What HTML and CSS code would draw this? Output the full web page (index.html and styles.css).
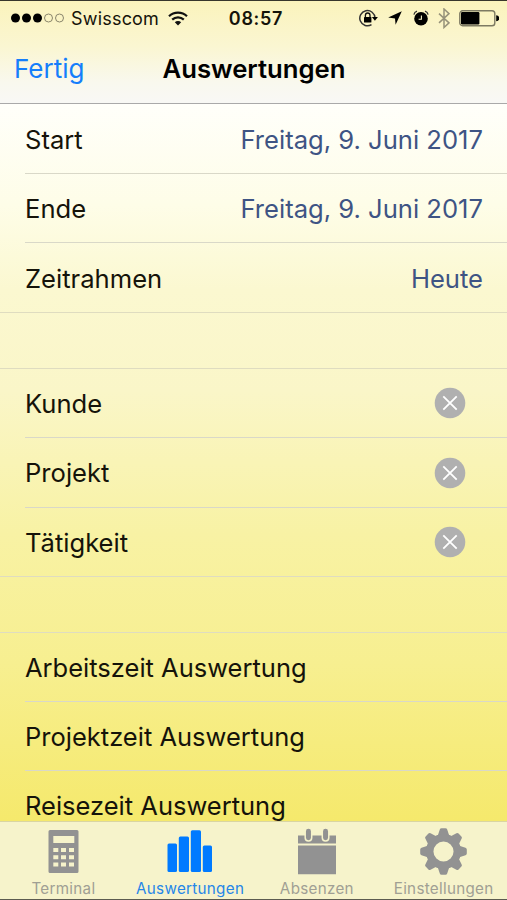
FILE: index.html
```html
<!DOCTYPE html>
<html lang="de">
<head>
    <meta charset="UTF-8">
    <meta name="viewport" content="width=device-width, initial-scale=1.0">
    <title>Auswertungen</title>
    <link rel="stylesheet" href="styles.css">
</head>
<body>
    <div class="screen">
        <header class="header">
            <div class="status-bar">
                <div class="status-left">
                    <svg class="signal" width="54" height="12" viewBox="0 0 54 12">
                        <circle cx="5.5" cy="6" r="4.5"/>
                        <circle cx="16.5" cy="6" r="4.5"/>
                        <circle cx="27.5" cy="6" r="4.5"/>
                        <circle class="empty" cx="38.5" cy="6" r="4"/>
                        <circle class="empty" cx="49.5" cy="6" r="4"/>
                    </svg>
                    <span class="carrier">Swisscom</span>
                    <svg class="wifi" width="20" height="15" viewBox="0 0 20 15">
                        <path d="M1 5.2a13 13 0 0 1 18 0M4.2 8.6a8.4 8.4 0 0 1 11.6 0" fill="none" stroke="#111" stroke-width="2.2"/>
                        <path d="M10 14.6l-3.2-3.4a4.6 4.6 0 0 1 6.4 0z" fill="#111"/>
                    </svg>
                </div>
                <span class="time">08:57</span>
                <div class="status-right">
                    <svg class="lock" width="20" height="18" viewBox="0 0 20 18">
                        <path d="M16 9A7.6 7.6 0 1 0 12.5 15.6" fill="none" stroke="#333" stroke-width="1.5"/>
                        <path d="M12.9 8h6l-3 3.8z"/>
                        <rect x="5" y="8" width="7.4" height="5.6" rx=".6"/>
                        <path d="M6.4 8V6.3a2.3 2.3 0 0 1 4.6 0V8" fill="none" stroke="#111" stroke-width="1.3"/>
                    </svg>
                    <svg class="location" width="14" height="14" viewBox="0 0 14 14">
                        <path d="M13.8.2L7.6 13.8 7 7.4.2 6.4z"/>
                    </svg>
                    <svg class="alarm" width="16" height="16" viewBox="0 0 16 16">
                        <circle cx="8" cy="8.8" r="6.8"/>
                        <path d="M.9 4.6A4.5 4.5 0 0 1 4 1.2M15.1 4.6A4.5 4.5 0 0 0 12 1.2" fill="none" stroke="#333" stroke-width="1.3"/>
                        <path d="M8.4 5.4v3.8H5.6" fill="none" stroke="#f8f3c8" stroke-width="1.1"/>
                    </svg>
                    <svg class="bluetooth" width="12" height="21" viewBox="0 0 12 21">
                        <path d="M1 5.6l10 9.3-5 4.6V1l5 4.6-10 9.3" fill="none" stroke="#96927a" stroke-width="1.5"/>
                    </svg>
                    <svg class="battery" width="40" height="17" viewBox="0 0 40 17">
                        <rect x=".8" y=".8" width="35" height="14.9" rx="2.8" fill="none" stroke="#7d7a62" stroke-width="1.4"/>
                        <rect x="2" y="2" width="18.4" height="12.5" rx="1.2"/>
                        <path d="M37.2 5.2a3 3 0 0 1 0 6z"/>
                    </svg>
                </div>
            </div>
            <nav class="nav-bar">
                <a class="done">Fertig</a>
                <h1 class="title">Auswertungen</h1>
            </nav>
        </header>

        <main class="content">
            <section class="group">
                <div class="row"><span class="label">Start</span><span class="value">Freitag, 9. Juni 2017</span></div>
                <div class="row"><span class="label">Ende</span><span class="value">Freitag, 9. Juni 2017</span></div>
                <div class="row"><span class="label">Zeitrahmen</span><span class="value">Heute</span></div>
            </section>
            <section class="group filters">
                <div class="row">
                    <span class="label">Kunde</span>
                    <svg class="clear" width="32" height="32" viewBox="0 0 32 32"><circle cx="16" cy="16" r="15.3"/><path d="M9.3 9.3l13.4 13.4M22.7 9.3L9.3 22.7"/></svg>
                </div>
                <div class="row">
                    <span class="label">Projekt</span>
                    <svg class="clear" width="32" height="32" viewBox="0 0 32 32"><circle cx="16" cy="16" r="15.3"/><path d="M9.3 9.3l13.4 13.4M22.7 9.3L9.3 22.7"/></svg>
                </div>
                <div class="row">
                    <span class="label">Tätigkeit</span>
                    <svg class="clear" width="32" height="32" viewBox="0 0 32 32"><circle cx="16" cy="16" r="15.3"/><path d="M9.3 9.3l13.4 13.4M22.7 9.3L9.3 22.7"/></svg>
                </div>
            </section>
            <section class="group reports">
                <div class="row"><span class="label">Arbeitszeit Auswertung</span></div>
                <div class="row"><span class="label">Projektzeit Auswertung</span></div>
                <div class="row"><span class="label">Reisezeit Auswertung</span></div>
            </section>
        </main>

        <footer class="tab-bar">
            <a class="tab">
                <svg width="48" height="50" viewBox="0 0 48 50">
                    <path fill-rule="evenodd" d="M11 5h27a1.500 1.500 0 0 1 1.500 1.500v40a1.500 1.500 0 0 1-1.500 1.500h-27a1.500 1.500 0 0 1-1.500-1.500v-40a1.500 1.500 0 0 1 1.500-1.500zM14.300 11v7h21v-7zM14.300 23v4h5v-4zM22 23v4h5v-4zM30 23v4h5v-4zM14.300 30.200v4h5v-4zM22 30.200v4h5v-4zM30 30.200v4h5v-4zM14.300 37.500v4h5v-4zM22 37.500v4h5v-4zM30 37.500v4h5v-4z"/>
                </svg>
                <span class="tab-text">Terminal</span>
            </a>
            <a class="tab active">
                <svg width="48" height="50" viewBox="0 0 48 50">
                    <rect x="1.5" y="18.5" width="9.5" height="28.5" rx="1.5"/>
                    <rect x="12.8" y="11.5" width="10.2" height="35.5" rx="1.5"/>
                    <rect x="24.8" y="5.3" width="10.2" height="41.7" rx="1.5"/>
                    <rect x="36.8" y="20.5" width="9.2" height="26.5" rx="1.5"/>
                </svg>
                <span class="tab-text">Auswertungen</span>
            </a>
            <a class="tab">
                <svg width="48" height="50" viewBox="0 0 48 50">
                    <path d="M5 10.5h38v8H5zM5 20.5h38V49.3H5z"/>
                    <rect class="ring" x="12.2" y="3" width="6.5" height="13" rx="3.2"/>
                    <rect class="ring" x="29.3" y="3" width="6.5" height="13" rx="3.2"/>
                </svg>
                <span class="tab-text">Absenzen</span>
            </a>
            <a class="tab">
                <svg width="48" height="50" viewBox="0 0 48 50">
                    <g transform="translate(23.5 26.5)">
                        <path id="tooth" d="M-6-15l2.300-7q.4-1.300 1.700-1.300h4q1.300 0 1.700 1.300l2.300 7z"/>
                        <use href="#tooth" transform="rotate(45)"/>
                        <use href="#tooth" transform="rotate(90)"/>
                        <use href="#tooth" transform="rotate(135)"/>
                        <use href="#tooth" transform="rotate(180)"/>
                        <use href="#tooth" transform="rotate(225)"/>
                        <use href="#tooth" transform="rotate(270)"/>
                        <use href="#tooth" transform="rotate(315)"/>
                        <circle class="gear-ring" r="13.8"/>
                    </g>
                </svg>
                <span class="tab-text">Einstellungen</span>
            </a>
        </footer>
    </div>
</body>
</html>
```
FILE: styles.css
```css
* {
    margin: 0;
    padding: 0;
    box-sizing: border-box;
}

body {
    font-family: Inter, Roboto, sans-serif;
    color: #15130a;
    overflow: hidden;
}

svg {
    display: block;
    flex-shrink: 0;
}

.screen {
    width: 507px;
    height: 900px;
    display: flex;
    flex-direction: column;
    border-top: 1px solid #38362b;
    border-bottom: 1px solid #5c5b50;
}

.header {
    height: 103px;
    flex-shrink: 0;
    background: linear-gradient(#fbf3bc, #faf6d2 45%, #f9f8ee 80%, #f8f8f5);
    border-bottom: 1px solid #a9a9a9;
}

.status-bar {
    height: 34px;
    display: grid;
    grid-template-columns: 1fr auto 1fr;
    align-items: center;
    padding: 0 8px 0 10px;
    font-size: 18px;
}

.status-left,
.status-right {
    display: flex;
    align-items: center;
}

.status-right {
    justify-content: flex-end;
}

.signal .empty {
    fill: none;
    stroke: #8a866c;
    stroke-width: 1;
}

.carrier {
    margin-left: 7px;
    letter-spacing: 0.2px;
}

.wifi {
    margin-left: 9px;
}

.time {
    padding-left: 3px;
    font-weight: 600;
    font-size: 18px;
    letter-spacing: 0.7px;
}

.location {
    margin-left: 9px;
}

.alarm {
    margin-left: 11px;
}

.bluetooth {
    margin-left: 9px;
}

.battery {
    margin-left: 9px;
}

.nav-bar {
    height: 66px;
    display: grid;
    grid-template-columns: 1fr auto 1fr;
    align-items: center;
    padding: 0 13px 0 14px;
}

.done {
    font-size: 26px;
    color: #157efb;
}

.title {
    font-size: 25.7px;
    font-weight: 600;
    color: #000;
}

.content {
    flex: 1;
    min-height: 0;
    overflow: hidden;
    background: linear-gradient(#fffffa 0, #fefde8 14%, #fbf8d0 26%, #faf6c8 40%, #f8f2a4 60%, #f7ef90 78%, #f5e96c 100%);
}

.group {
    margin-bottom: 55px;
    border-bottom: 1px solid #dfdcc0;
}

.group + .group {
    border-top: 1px solid #dfdcc0;
}

.row {
    height: 69.5px;
    margin-left: 25px;
    padding: 2px 24px 0 0;
    display: flex;
    align-items: center;
    justify-content: space-between;
    border-bottom: 1px solid #d9d8c8;
    font-size: 25.6px;
}

.row:last-child {
    height: 68.5px;
    border-bottom: none;
}

.filters .row {
    padding-top: 1px;
}

.reports .row {
    height: 69px;
    padding-top: 0;
    font-size: 25.5px;
}

.value {
    color: #3e5484;
}

.clear {
    margin-right: 17px;
    fill: #b0b0b0;
}

.clear path {
    stroke: #fff;
    stroke-width: 1.8;
}

.tab-bar {
    height: 78px;
    flex-shrink: 0;
    display: grid;
    grid-template-columns: repeat(4, 1fr);
    padding-top: 3px;
    background: #f6f3cb;
    border-top: 1px solid #d9d5a2;
}

.tab {
    display: flex;
    flex-direction: column;
    align-items: center;
    fill: #929292;
    color: #a09f94;
}

.active {
    fill: #007aff;
    color: #2586e8;
}

.tab-text {
    font-size: 15.2px;
    line-height: 18px;
    margin-top: 5px;
    letter-spacing: 0.3px;
}

.ring {
    stroke: #f6f3cb;
    stroke-width: 1.5;
}

.gear-ring {
    fill: none;
    stroke: #929292;
    stroke-width: 7.5;
}
```
